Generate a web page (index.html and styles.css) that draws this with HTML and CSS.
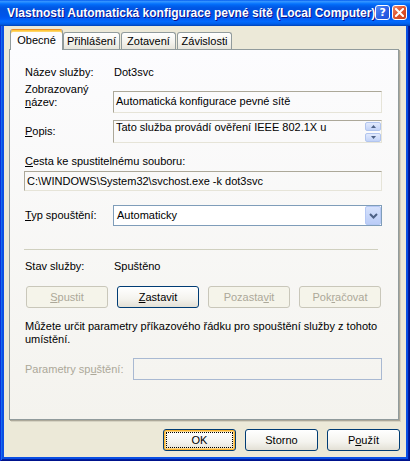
FILE: index.html
```html
<!DOCTYPE html>
<html lang="cs">
<head>
<meta charset="utf-8">
<title>Vlastnosti</title>
<link rel="stylesheet" href="styles.css">
</head>
<body>
<div class="window">
  <div class="titlebar">
    <span class="title">Vlastnosti Automatická konfigurace pevné sítě (Local Computer)</span>
    <div class="caption-buttons">
      <span class="cbtn help">?</span>
      <span class="cbtn close"><svg width="9" height="9" viewBox="0 0 9 9"><path d="M1 1 L8 8 M8 1 L1 8" stroke="#fff" stroke-width="2" stroke-linecap="square"/></svg></span>
    </div>
  </div>
  <div class="client">
    <div class="tabs">
      <div class="tab active">Obecné</div>
      <div class="tab t2">Přihlášení</div>
      <div class="tab t3">Zotavení</div>
      <div class="tab t4">Závislosti</div>
    </div>
    <div class="panel">
      <div class="row r-name"><span class="label">Název služby:</span><span class="value">Dot3svc</span></div>
      <div class="row r-disp"><span class="label">Zobrazovaný<br><u>n</u>ázev:</span><div class="field f-disp">Automatická konfigurace pevné sítě</div></div>
      <div class="row r-desc"><span class="label"><u>P</u>opis:</span><div class="field f-desc"><span class="ftext">Tato služba provádí ověření IEEE 802.1X u</span><div class="spin"><span class="sb"><svg width="5" height="3" viewBox="0 0 5 3"><path d="M0 3 L2.5 0 L5 3 Z" fill="#4D6185"/></svg></span><span class="sb"><svg width="5" height="3" viewBox="0 0 5 3"><path d="M0 0 L2.5 3 L5 0 Z" fill="#4D6185"/></svg></span></div></div></div>
      <div class="path-label"><u>C</u>esta ke spustitelnému souboru:</div>
      <div class="field f-path">C:\WINDOWS\System32\svchost.exe -k dot3svc</div>
      <div class="row r-type"><span class="label"><u>T</u>yp spouštění:</span><div class="select"><span class="stext">Automaticky</span><span class="sbtn"><svg width="9" height="6" viewBox="0 0 9 6"><path d="M1 1 L4.5 4.5 L8 1" fill="none" stroke="#4D6185" stroke-width="2"/></svg></span></div></div>
      <div class="sep"></div>
      <div class="row r-status"><span class="label">Stav služby:</span><span class="value">Spuštěno</span></div>
      <div class="svc-buttons">
        <button class="btn" disabled><u>S</u>pustit</button>
        <button class="btn"><u>Z</u>astavit</button>
        <button class="btn" disabled>Pozasta<u>v</u>it</button>
        <button class="btn" disabled>Pok<u>r</u>ačovat</button>
      </div>
      <p class="info">Můžete určit parametry příkazového řádku pro spouštění služby z tohoto<br>umístění.</p>
      <div class="row r-params"><span class="label params-label">Parametry sp<u>u</u>štění:</span><div class="field f-params"></div></div>
    </div>
    <div class="footer">
      <button class="btn default"><span class="focus">OK</span></button>
      <button class="btn">Storno</button>
      <button class="btn">P<u>o</u>užít</button>
    </div>
  </div>
</div>
</body>
</html>
```
FILE: styles.css
```css
html, body {
  margin: 0;
  padding: 0;
}
body {
  font: 11px "Liberation Sans", Arial, sans-serif;
  color: #000;
}
.window {
  width: 410px;
  height: 461px;
  box-sizing: border-box;
  display: flex;
  flex-direction: column;
  background: #0A4FE4;
  box-shadow: inset 1px 0 #0831D9, inset -1px -1px #00138C, inset 2px 0 #166AEE, inset -2px -2px #001EA0;
}
.titlebar {
  height: 26px;
  flex: none;
  display: flex;
  align-items: center;
  padding: 0 5px 0 7px;
  background: linear-gradient(to bottom, #0058EE 0%, #3593FF 5%, #288EFF 8%, #127DFF 12%, #036FFC 16%, #0262EE 22%, #0057E5 30%, #0054E3 38%, #0055EB 62%, #005BF5 72%, #026AFE 82%, #0062EF 90%, #0052D6 96%, #0040AB 100%);
}
.title {
  flex: 1;
  color: #fff;
  font-weight: bold;
  font-size: 12px;
  white-space: nowrap;
  text-shadow: 1px 1px #0F1089;
  letter-spacing: 0;
}
.caption-buttons {
  display: flex;
  gap: 2px;
  margin-top: -1px;
}
.cbtn {
  box-sizing: border-box;
  width: 15px;
  height: 15px;
  border: 1px solid #fff;
  border-radius: 3px;
  display: flex;
  align-items: center;
  justify-content: center;
  color: #fff;
}
.help {
  background: linear-gradient(135deg, #5A8EF5 0%, #2C63E8 50%, #1D4FD8 100%);
  font: bold 11px "DejaVu Sans", sans-serif;
}
.close {
  background: linear-gradient(135deg, #EF8C6E 0%, #E0552F 45%, #C8401C 100%);
}
.client {
  flex: 1;
  margin: 0 4px 4px 4px;
  background: #ECE9D8;
  padding: 3px 7px 0 5px;
  display: flex;
  flex-direction: column;
}
.tabs {
  height: 20px;
  display: flex;
  align-items: flex-end;
  margin-left: 1px;
  position: relative;
  z-index: 1;
}
.tab {
  box-sizing: border-box;
  height: 17px;
  border: 1px solid #919B9C;
  border-bottom: none;
  border-radius: 3px 3px 0 0;
  background: linear-gradient(#FFFFFF, #F3F2EC 60%, #E6E4DA);
  text-align: center;
  line-height: 16px;
  white-space: nowrap;
}
.tab.active {
  height: 21px;
  margin-bottom: -1px;
  background: #FCFCFE;
  border-top: 1px solid #E68B2C;
  box-shadow: inset 0 1px #FFC73C, inset 0 2px #FFD567;
  line-height: 20px;
  width: 53px;
}
.t2 { width: 57px; }
.t3 { width: 55px; margin-left: 1px; }
.t4 { width: 55px; margin-left: 1px; }
.panel {
  box-sizing: border-box;
  height: 371px;
  border: 1px solid #919B9C;
  background: linear-gradient(#FCFCFE, #F4F3EE);
  box-shadow: 1px 1px 0 #ACA899, 2px 2px 0 #D6D3C3;
  padding: 16px 16px 0 15px;
  display: flex;
  flex-direction: column;
}
.row {
  display: flex;
  align-items: flex-start;
}
.label {
  width: 88px;
  flex: none;
  line-height: 13px;
}
.value {
  line-height: 13px;
  padding-left: 1px;
}
.r-name { height: 13px; }
.r-disp { margin-top: 4px; }
.field {
  box-sizing: border-box;
  border: 1px solid;
  border-color: #ACA899 #E6E4D8 #E6E4D8 #ACA899;
  padding-left: 2px;
  white-space: nowrap;
  overflow: hidden;
}
.f-disp {
  flex: 1;
  margin-top: 8px;
  height: 22px;
  line-height: 18px;
}
.r-desc { margin-top: 7px; }
.r-desc .label { padding-top: 5px; }
.f-desc {
  flex: 1;
  height: 23px;
  display: flex;
  line-height: 13px;
}
.ftext { flex: 1; }
.spin {
  width: 16px;
  display: flex;
  flex-direction: column;
  gap: 2px;
  padding-top: 1px;
}
.sb {
  box-sizing: border-box;
  height: 9px;
  border: 1px solid #B2C5EE;
  border-radius: 2px;
  background: linear-gradient(#E2EAFD, #C2D3F8);
  display: flex;
  align-items: center;
  justify-content: center;
}
.path-label {
  margin-top: 12px;
  line-height: 13px;
}
.f-path {
  margin-top: 3px;
  margin-left: -1px;
  height: 20px;
  line-height: 18px;
}
.r-type { margin-top: 14px; }
.r-type .label { line-height: 21px; }
.select {
  flex: 1;
  box-sizing: border-box;
  height: 21px;
  border: 1px solid #7F9DB9;
  background: #fff;
  display: flex;
  align-items: stretch;
}
.stext {
  flex: 1;
  padding-left: 3px;
  line-height: 19px;
}
.sbtn {
  box-sizing: border-box;
  width: 16px;
  border: 1px solid #B5C8F4;
  border-radius: 2px;
  background: linear-gradient(#D6E2FC, #BACCF7);
  display: flex;
  align-items: center;
  justify-content: center;
}
.sep {
  margin-top: 23px;
  margin-left: -1px;
  margin-right: 4px;
  height: 0;
  border-top: 1px solid #D0D0BF;
}
.r-status { margin-top: 10px; height: 13px; }
.svc-buttons {
  margin-top: 13px;
  margin-left: 1px;
  display: grid;
  grid-template-columns: repeat(4, 82px);
  column-gap: 9px;
}
.btn {
  box-sizing: border-box;
  height: 22px;
  padding: 0;
  font: 11px "Liberation Sans", Arial, sans-serif;
  color: #000;
  border: 1px solid #003C74;
  border-radius: 3px;
  background: linear-gradient(#FFFFFF 0%, #F4F3EE 60%, #E3E0D5 100%);
  display: flex;
  align-items: center;
  justify-content: center;
}
.btn:disabled {
  border-color: #C9C7BA;
  background: #F5F4EA;
  color: #ACA899;
}
.info {
  margin: 12px 0 0 0;
  line-height: 13px;
  white-space: nowrap;
}
.r-params { margin-top: 12px; }
.params-label {
  width: 108px;
  line-height: 22px;
  color: #ACA899;
}
.f-params {
  flex: 1;
  height: 22px;
  border: 1px solid #A9B9D2;
}
.footer {
  margin-top: 9px;
  margin-right: -1px;
  display: flex;
  justify-content: flex-end;
  gap: 9px;
}
.footer .btn {
  width: 73px;
}
.btn.default {
  box-shadow: inset 0 0 0 1px #F8B330, inset 0 0 0 2px #FCD787;
}
.focus {
  box-sizing: border-box;
  width: 67px;
  height: 16px;
  border: 1px dotted #000;
  display: flex;
  align-items: center;
  justify-content: center;
}
```
